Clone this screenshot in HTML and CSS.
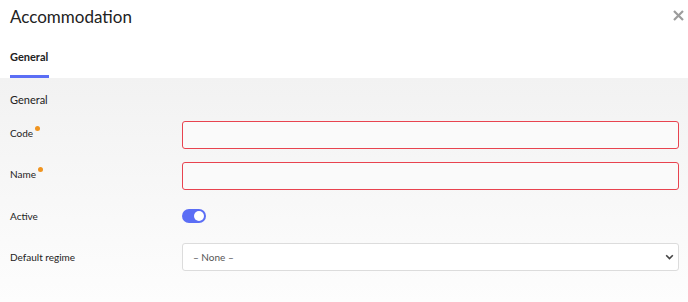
FILE: index.html
```html
<!DOCTYPE html>
<html lang="en">
    <head>
        <title>Accommodation</title>
        <link rel="stylesheet" href="styles.css">
    </head>
    <body>
        <div class="modalHeader">
            <h1>Accommodation</h1>
            <svg class="closeBtn" width="11" height="11" viewBox="0 0 11 11"><path d="M1 1 L10 10 M10 1 L1 10" stroke="#9c9c9c" stroke-width="2.2"/></svg>
        </div>
        <div class="tabs">
            <div class="tab active">General</div>
        </div>

        <div class="modalBody">
            <div class="sectionTitle">General</div>

            <div class="formRow">
                <label for="code" class="required">Code</label>
                <input type="text" id="code" class="invalid">
            </div>
            <div class="formRow">
                <label for="name" class="required">Name</label>
                <input type="text" id="name" class="invalid">
            </div>
            <div class="formRow short">
                <label>Active</label>
                <span class="toggle on"><span class="knob"></span></span>
            </div>
            <div class="formRow">
                <label for="regime">Default regime</label>
                <div class="selectWrap">
                    <select id="regime">
                        <option>&ndash; None &ndash;</option>
                    </select>
                    <svg class="chevron" width="9" height="6" viewBox="0 0 9 6"><path d="M1.2 1.2 L4.5 4.5 L7.8 1.2" fill="none" stroke="#444" stroke-width="1.6"/></svg>
                </div>
            </div>
        </div>
    </body>
</html>
```

FILE: styles.css
```css
body {
    margin: 0;
    font-family: 'Lato', 'Open Sans', sans-serif;
    color: #222;
    background: #fff;
}
.modalHeader {
    display: flex;
    justify-content: space-between;
    align-items: flex-start;
    padding: 7px 4px 0 10px;
    height: 28px;
}
h1 {
    margin: 0;
    font-size: 17px;
    line-height: 20px;
    font-weight: 400;
}
.closeBtn {
    margin-top: 3px;
}
.tabs {
    display: flex;
    padding: 0 10px;
    height: 43px;
}
.tab {
    font-size: 11px;
    line-height: 13px;
    font-weight: 700;
    padding-top: 15px;
    box-sizing: border-box;
    height: 43px;
    width: 39px;
}
.tab.active {
    border-bottom: 3px solid #5b6ef5;
}
.modalBody {
    background: linear-gradient(#f2f2f2, #fdfdfd 95%);
    padding: 15px 9px 30px 10px;
    min-height: 180px;
}
.sectionTitle {
    font-size: 11px;
    line-height: 13px;
    margin-bottom: 15px;
}
.formRow {
    display: flex;
    align-items: center;
    height: 28px;
    margin-bottom: 13px;
}
.formRow.short {
    height: 25px;
    margin-bottom: 15px;
}
.formRow label {
    width: 172px;
    font-size: 10px;
    flex-shrink: 0;
}
.formRow label.required {
    margin-bottom: 5px;
}
.required::after {
    content: "";
    display: inline-block;
    width: 5px;
    height: 5px;
    border-radius: 50%;
    background: #f0941f;
    vertical-align: 6px;
    margin-left: 2px;
}
input {
    flex: 1;
    height: 28px;
    box-sizing: border-box;
    border: 1.5px solid #e8434f;
    border-radius: 3px;
    background: #fafafa;
    outline: none;
}
.toggle {
    width: 24px;
    height: 14px;
    border-radius: 7px;
    background: #5b6ef5;
    position: relative;
    display: inline-block;
}
.toggle .knob {
    position: absolute;
    top: 2px;
    right: 2px;
    width: 10px;
    height: 10px;
    border-radius: 50%;
    background: #fff;
}
.selectWrap {
    flex: 1;
    position: relative;
    height: 28px;
}
select {
    width: 100%;
    height: 28px;
    appearance: none;
    border: 1px solid #dcdcdc;
    border-radius: 3px;
    background: #fff;
    color: #555;
    font-family: 'Lato', 'Open Sans', sans-serif;
    font-size: 10px;
    padding-left: 10px;
    outline: none;
}
.chevron {
    position: absolute;
    right: 5px;
    top: 11px;
}
```
